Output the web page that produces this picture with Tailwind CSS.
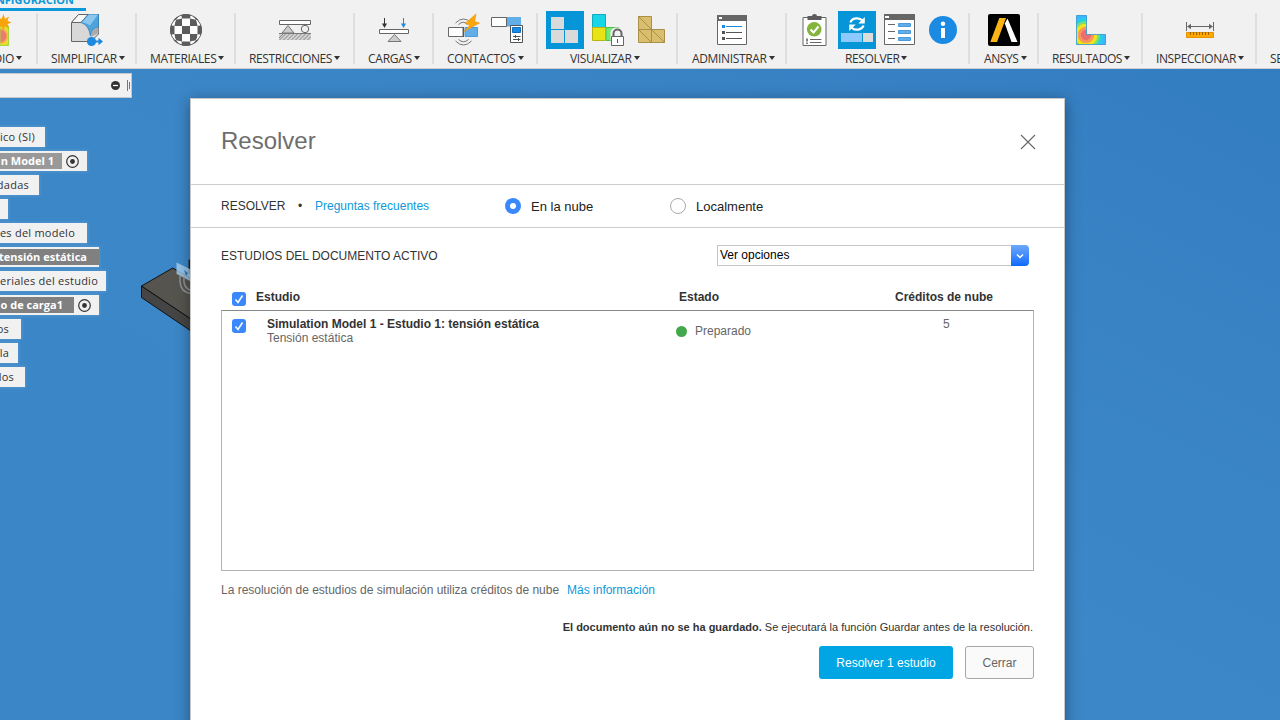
<!DOCTYPE html>
<html lang="es">
<head>
<meta charset="utf-8">
<title>Resolver</title>
<script src="https://cdn.jsdelivr.net/npm/@tailwindcss/browser@4"></script>
</head>
<body class="relative flex h-[720px] w-[1280px] flex-col overflow-hidden bg-[#3b86c6] font-['Liberation_Sans',Arial,sans-serif]">

<!-- Ribbon -->
<header class="flex h-[69px] shrink-0 flex-col overflow-hidden border-b border-[#cfcfcf] bg-[#f1f1f1] font-['Open_Sans',sans-serif] text-[12px] text-[#333]">
  <div class="flex h-[13px] w-[86px] shrink-0 flex-col">
    <div class="flex h-[7px] items-end justify-end pr-[12px] text-[11px] leading-[14px] font-bold text-[#0d99d9]"><span>NFIGURACIÓN</span></div>
    <div class="mt-px h-[3px] bg-[#0d99d9]"></div>
  </div>
  <div class="flex h-[51px] w-[1330px] [&>*>*]:shrink-0 [&>*>*:first-child]:-mt-[2px]">
    <div class="flex w-[36px] flex-col">
      <svg class="h-[38px] w-[14px]" viewBox="0 11 14 38"><defs><radialGradient id="heat0" gradientUnits="userSpaceOnUse" cx="0" cy="36" r="13"><stop offset=".45" stop-color="#ee7a73"/><stop offset=".5" stop-color="#fba052"/><stop offset=".7" stop-color="#f5e02a"/><stop offset="1" stop-color="#8be04e"/></radialGradient></defs><path d="M0 26H8.500V45.500H0Z" fill="url(#heat0)" stroke="#a3d93a"/><path d="M3.500 14l1.500 5 4-2.500-1.500 4.200 4 1.800-4 1.600 1.500 4.400-4.300-2.500L3.500 31l-1.700-4.800L-2 28V17l3.500 2z" fill="#f7a30a"/></svg>
      <div class="flex h-[20px] items-center"><span class="flex w-[14px] justify-end tracking-[-0.3px]">DIO</span><i class="-mt-[2px] ml-[2px] h-[4px] w-[6px] bg-[#333] [clip-path:polygon(0_0,100%_0,50%_100%)]"></i></div>
    </div>
    <div class="flex w-[99px] flex-col border-l-2 border-[#dedede] pl-[13px]">
      <svg class="ml-[20px] h-[38px] w-[34px]" viewBox="71 11 34 38"><path d="M71.500 22.500L78.500 14.500H98.500V34L91 41.500H71.500Z" fill="#d8d8d8" stroke="#666"/><path d="M71.500 22.500L78.500 14.500H88L81 22.500Z" fill="#f6f6f6" stroke="#666"/><path d="M88.500 14.500H98.500V27Q91.500 28 90.500 36Q89 25 81 22.500Z" fill="#4ea3dc" stroke="#2d82bd" stroke-width=".8"/><path d="M89 14.500H98L90 25.500Q87 23 82 22.300Z" fill="#8cc6ee"/><path d="M90.500 37Q91.500 28.500 98.500 27.500V33Z" fill="#aaa"/><path d="M91 41.500H98" stroke="#f1f1f1" stroke-width="3"/><circle cx="91.500" cy="41.500" r="4.600" fill="#1a8ae2"/><path d="M95 41.500h5" stroke="#1a8ae2" stroke-width="2"/><path d="M98.500 37.800l4.500 3.700-4.500 3.700z" fill="#1a8ae2"/></svg>
      <div class="flex h-[20px] items-center"><span class="w-[66px] tracking-[-0.34px]">SIMPLIFICAR</span><i class="-mt-[2px] ml-[2px] h-[4px] w-[6px] bg-[#333] [clip-path:polygon(0_0,100%_0,50%_100%)]"></i></div>
    </div>
    <div class="flex w-[99px] flex-col border-l-2 border-[#dedede] pl-[13px]">
      <svg class="ml-[20px] h-[38px] w-[32px]" viewBox="170 11 32 38"><clipPath id="ball"><circle cx="186" cy="30" r="16"/></clipPath><g clip-path="url(#ball)"><path d="M170 14h32v32h-32z" fill="#fff"/><g fill="#5c5c5c"><path d="M182 26h8v8h-8zM181.500 14h9l-.3 4.500h-8.400zM181.500 46h9l-.3-4.500h-8.400zM170 25.500v9l4.500-.3v-8.400zM202 25.500v9l-4.500-.3v-8.400z"/><path d="M182 26h-7.500q.3-4 1.700-6.300l5.800-1.200zM190 26h7.500q-.3-4-1.700-6.300l-5.800-1.200zM182 34h-7.500q.3 4 1.700 6.300l5.800 1.200zM190 34h7.500q-.3 4-1.700 6.300l-5.800 1.200z"/><path d="M176.200 19.700L171 21V14h9zM195.800 19.700L201 21V14h-9zM176.200 40.300L171 39v7h9zM195.800 40.300L201 39v7h-9z"/></g></g><circle cx="186" cy="30" r="15.500" fill="none" stroke="#5c5c5c"/></svg>
      <div class="flex h-[20px] items-center"><span class="w-[66px] tracking-[-0.3px]">MATERIALES</span><i class="-mt-[2px] ml-[2px] h-[4px] w-[6px] bg-[#333] [clip-path:polygon(0_0,100%_0,50%_100%)]"></i></div>
    </div>
    <div class="flex w-[119px] flex-col border-l-2 border-[#dedede] pl-[13px]">
      <svg class="ml-[30px] h-[38px] w-[32px]" viewBox="279 11 32 38"><path d="M279.500 20.500h31v4h-31z" fill="#fff" stroke="#666"/><path d="M282 33l6-7.500 6 7.500z" fill="#ccc" stroke="#777"/><circle cx="305" cy="29" r="3.700" fill="#f1f1f1" stroke="#666"/><path d="M279 33h32v7h-32z" fill="#d2d2d2"/><path d="M279 33.500h32" stroke="#777"/><path d="M279 38l4-4M279.500 40l6-6M283.500 40l6-6M287.500 40l6-6M291.500 40l6-6M295.500 40l6-6M299.500 40l6-6M303.500 40l6-6M307.500 40l3.500-3.500" stroke="#888"/></svg>
      <div class="flex h-[20px] items-center"><span class="w-[83px] tracking-[-0.39px]">RESTRICCIONES</span><i class="-mt-[2px] ml-[2px] h-[4px] w-[6px] bg-[#333] [clip-path:polygon(0_0,100%_0,50%_100%)]"></i></div>
    </div>
    <div class="flex w-[79px] flex-col border-l-2 border-[#dedede] pl-[13px]">
      <svg class="ml-[11px] h-[38px] w-[30px]" viewBox="379 11 30 38"><path d="M379.500 29.500h29v4h-29z" fill="#fff" stroke="#666"/><path d="M388 41.500l6.500-7 6.500 7z" fill="#ccc" stroke="#777"/><path d="M384.500 18v8" stroke="#333"/><path d="M382 23.500h5l-2.500 4.500z" fill="#333"/><path d="M403.500 18v8" stroke="#1a8ae2"/><path d="M401 23.500h5l-2.500 4.500z" fill="#1a8ae2"/></svg>
      <div class="flex h-[20px] items-center"><span class="w-[44px] tracking-[-0.25px]">CARGAS</span><i class="-mt-[2px] ml-[2px] h-[4px] w-[6px] bg-[#333] [clip-path:polygon(0_0,100%_0,50%_100%)]"></i></div>
    </div>
    <div class="flex w-[104px] flex-col border-l-2 border-[#dedede] pl-[13px]">
      <div class="ml-[1px] flex gap-[11px]">
        <svg class="h-[38px] w-[32px]" viewBox="448 11 32 38"><path d="M448.500 27.500h14.500v9h-14.500z" fill="#fff" stroke="#666"/><path d="M465 27.500h12.500v9H465z" fill="#62aee8" stroke="#4f9bd8"/><path d="M463.500 27v10" stroke="#c22"/><path d="M455.500 23q8-8 16 0M458.500 24.500q5-4.500 9 0M455.500 41q8 8 16 0M458.500 39.500q5 4.500 10 0" fill="none" stroke="#777"/><path d="M476 14l-11 9.500 5 1.500-6 6.500L479.500 23l-4.800-1.500z" fill="#fba70c" stroke="#f19400" stroke-width=".6"/></svg>
        <svg class="h-[38px] w-[33px]" viewBox="491 11 33 38"><path d="M506 17h15v9.500h-15z" fill="#62aee8"/><path d="M491.500 17.500h15v9h-15z" fill="#fff" stroke="#666"/><path d="M510.500 25.500h12v17h-12z" fill="#fff" stroke="#555"/><path d="M512.500 27.500h8v5h-8z" fill="#1a8ae2" stroke="#0f6fbd"/><path d="M513 36.500h7.500M513 39.500h7.500M515.500 35v3M518.500 38v3" stroke="#555"/></svg>
      </div>
      <div class="flex h-[20px] items-center"><span class="w-[69px] tracking-[-0.19px]">CONTACTOS</span><i class="-mt-[2px] ml-[2px] h-[4px] w-[6px] bg-[#333] [clip-path:polygon(0_0,100%_0,50%_100%)]"></i></div>
    </div>
    <div class="flex w-[140px] flex-col border-l-2 border-[#dedede] pl-[8px]">
      <div class="flex gap-[8px]">
        <svg class="h-[38px] w-[38px] bg-[#0696d7]" viewBox="546 11 38 38"><path d="M551 17h13v12h-13zM551 30h13v13h-13zM565 30h13v13h-13z" fill="#dadada"/></svg>
        <svg class="h-[38px] w-[32px]" viewBox="592 11 32 38"><path d="M592.500 14.500h13v13h-13z" fill="#19d5e8" stroke="#0fabc0"/><path d="M606 27.500h13v13h-13z" fill="#74e874" stroke="#4fbf4f"/><path d="M592.500 27.500h13v13h-13z" fill="#e8e317" stroke="#b9b40f"/><path d="M610.500 36V32q1-4 5-4.500h4q4 .5 4.500 8.500h1v10h-14z" fill="#f1f1f1"/><path d="M613.500 36v-2.500a4 4 0 0 1 8 0V36" fill="none" stroke="#666" stroke-width="2"/><path d="M611.500 36.500h12v9h-12z" fill="#fff" stroke="#666"/><path d="M617.500 39v4" stroke="#555"/></svg>
        <svg class="ml-[6px] h-[38px] w-[27px]" viewBox="638 11 27 38"><g fill="#d9be6e" stroke="#ab8f47"><path d="M638.500 16.500h13v13h-13zM638.500 29.500h13v13h-13zM651.500 29.500h13v13h-13z"/><path d="M638.500 16.500l13 13M638.500 29.500l13 13M651.500 29.500l13 13"/></g></svg>
      </div>
      <div class="ml-[24px] flex h-[20px] items-center"><span class="w-[62px] tracking-[-0.34px]">VISUALIZAR</span><i class="-mt-[2px] ml-[2px] h-[4px] w-[6px] bg-[#333] [clip-path:polygon(0_0,100%_0,50%_100%)]"></i></div>
    </div>
    <div class="flex w-[109px] flex-col border-l-2 border-[#dedede] pl-[14px]">
      <svg class="ml-[25px] h-[38px] w-[30px]" viewBox="717 11 30 38"><path d="M717.500 15.500h29v29h-29z" fill="#fff" stroke="#666"/><path d="M717 15h30v6h-30z" fill="#666"/><path d="M719 17h3v2h-3z" fill="#fff"/><path d="M722 25h3v3h-3z" fill="#1a8ae2"/><path d="M726 26.500h16" stroke="#1a8ae2"/><path d="M722 31h3v3h-3zM722 37h3v3h-3z" fill="#555"/><path d="M726 32.500h16M726 38.500h16" stroke="#555"/></svg>
      <div class="flex h-[20px] items-center"><span class="w-[75px] tracking-[-0.35px]">ADMINISTRAR</span><i class="-mt-[2px] ml-[2px] h-[4px] w-[6px] bg-[#333] [clip-path:polygon(0_0,100%_0,50%_100%)]"></i></div>
    </div>
    <div class="flex w-[183px] flex-col border-l-2 border-[#dedede] pl-[15px]">
      <div class="flex">
        <svg class="h-[38px] w-[25px]" viewBox="802.500 11 25 38"><path d="M803.500 17.500h23v28h-23z" fill="#fff" stroke="#666"/><path d="M808 16h4.500q0-2 2.500-2t2.500 2h4.500v4h-14z" fill="#5c5c5c"/><circle cx="814.700" cy="29.300" r="7.300" fill="#83b53c"/><path d="M811 29.500l3 3 5-6" fill="none" stroke="#fff" stroke-width="2"/><path d="M807.500 38.500v3M807.500 42.500v1.500" stroke="#555" stroke-width="1.500"/><path d="M810.500 39.500h11.500M810.500 42.500h11.500" stroke="#666"/></svg>
        <svg class="ml-[11px] h-[38px] w-[38px] bg-[#0696d7]" viewBox="838 11 38 38"><path d="M841 33h21v9h-21z" fill="#8cc9fc"/><path d="M863 33h10v9h-10z" fill="#dcdcdc"/><g fill="none" stroke="#fff" stroke-width="2.200"><path d="M850.500 22.500a6.800 5.500 0 0 1 12-2"/><path d="M863.500 25.500a6.800 5.500 0 0 1-12 2"/></g><path d="M864.800 17v6.500h-6.500zM849.200 31v-6.500h6.500z" fill="#fff"/></svg>
        <svg class="ml-[8px] h-[38px] w-[31px]" viewBox="884 11 31 38"><path d="M884.500 14.500h30v30h-30z" fill="#fff" stroke="#666"/><path d="M884 14h31v6h-31z" fill="#666"/><path d="M885 16h4v2h-4z" fill="#fff"/><path d="M888 24.500h7M888 31.500h7M888 38.500h7" stroke="#666"/><path d="M898.500 23.500h12v3h-12zM898.500 30.500h12v3h-12zM898.500 37.500h12v3h-12z" fill="#62aee8" stroke="#4b9bdc"/></svg>
        <svg class="ml-[14px] h-[38px] w-[28px]" viewBox="929 11 28 38"><circle cx="943" cy="30" r="14" fill="#1a8ae2"/><circle cx="943" cy="23.800" r="2.200" fill="#fff"/><path d="M941 28h4v10h-4z" fill="#fff"/></svg>
      </div>
      <div class="ml-[43px] flex h-[20px] items-center"><span class="w-[54px] tracking-[-0.37px]">RESOLVER</span><i class="-mt-[2px] ml-[2px] h-[4px] w-[6px] bg-[#333] [clip-path:polygon(0_0,100%_0,50%_100%)]"></i></div>
    </div>
    <div class="flex w-[69px] flex-col border-l-2 border-[#dedede] pl-[14px]">
      <svg class="ml-[4px] h-[38px] w-[32px]" viewBox="988 11 32 38"><rect x="988" y="14" width="32" height="32" rx="2" fill="#000"/><path d="M990.300 42L999.300 18H1006L997 42Z" fill="#fdb515"/><path d="M1004.800 23.500L1007.500 18.500L1017.500 42H1011.500Z" fill="#fff"/></svg>
      <div class="flex h-[20px] items-center"><span class="w-[35px] tracking-[-0.4px]">ANSYS</span><i class="-mt-[2px] ml-[2px] h-[4px] w-[6px] bg-[#333] [clip-path:polygon(0_0,100%_0,50%_100%)]"></i></div>
    </div>
    <div class="flex w-[104px] flex-col border-l-2 border-[#dedede] pl-[13px]">
      <svg class="ml-[24px] h-[38px] w-[30px]" viewBox="1076 11 30 38"><defs><radialGradient id="heat1" gradientUnits="userSpaceOnUse" cx="1086" cy="35" r="20"><stop offset=".24" stop-color="#e86f6d"/><stop offset=".26" stop-color="#f88f62"/><stop offset=".4" stop-color="#faa04f"/><stop offset=".42" stop-color="#f7e016"/><stop offset=".55" stop-color="#ece424"/><stop offset=".58" stop-color="#7ddf6b"/><stop offset=".69" stop-color="#67dd8c"/><stop offset=".72" stop-color="#1cd3df"/><stop offset=".84" stop-color="#2acdf0"/><stop offset=".87" stop-color="#3cb8fa"/></radialGradient></defs><path d="M1076.500 15.500h10v19h19v10h-29z" fill="url(#heat1)" stroke="#2f93cf" stroke-opacity=".8"/></svg>
      <div class="flex h-[20px] items-center"><span class="w-[70px] tracking-[-0.45px]">RESULTADOS</span><i class="-mt-[2px] ml-[2px] h-[4px] w-[6px] bg-[#333] [clip-path:polygon(0_0,100%_0,50%_100%)]"></i></div>
    </div>
    <div class="flex w-[114px] flex-col border-l-2 border-[#dedede] pl-[13px]">
      <svg class="ml-[30px] h-[38px] w-[28px]" viewBox="1186 11 28 38"><path d="M1186.500 22v9M1213.500 22v9M1188 26.500h24" stroke="#666"/><path d="M1187 26.500l4-2.700v5.400zM1213 26.500l-4-2.700v5.400z" fill="#666"/><path d="M1186.500 32.500h27v5h-27z" fill="#ffa800" stroke="#e59200"/><path d="M1190.500 32v3M1193.500 32v3M1196.500 32v3M1199.500 32v3M1202.500 32v3M1205.500 32v3M1208.500 32v3" stroke="#9a6400"/></svg>
      <div class="flex h-[20px] items-center"><span class="w-[80px] tracking-[-0.39px]">INSPECCIONAR</span><i class="-mt-[2px] ml-[2px] h-[4px] w-[6px] bg-[#333] [clip-path:polygon(0_0,100%_0,50%_100%)]"></i></div>
    </div>
    <div class="flex w-[60px] flex-col border-l-2 border-[#dedede] pl-[13px]">
      <div class="h-[38px]"></div>
      <div class="flex h-[20px] items-center tracking-[-0.35px]">SE</div>
    </div>
  </div>
</header>

<!-- Canvas with the browser tree -->
<main class="flex min-h-0 flex-1 flex-col bg-[linear-gradient(to_bottom_left,#327cc0,#3882c4_20%,#3c87c8_50%,#3b86c6)] pt-[4px] font-['Open_Sans',sans-serif] text-[11px] tracking-[0.24px] text-[#333]">
  <div class="flex h-[25px] w-[132px] shrink-0 items-center justify-end border border-l-0 border-[#c4c8cc] bg-[#f1f1f1]">
    <svg class="h-[11px] w-[22px]" viewBox="0 0 22 11"><circle cx="6.500" cy="5.500" r="4.500" fill="#333"/><path d="M4 5.500h5" stroke="#fff" stroke-width="1.200"/><path d="M18.500 0v11M20.500 2v7" stroke="#777"/></svg>
  </div>
  <div class="mt-[29px] flex flex-col items-start gap-[4px] whitespace-nowrap *:flex *:h-[20px] *:items-center *:justify-end *:bg-[#f1f1f1] *:shadow-[0_0_3px_1px_rgba(255,255,255,0.13)]">
    <div class="w-[45px] pr-[10px]">ico (SI)</div>
    <div class="w-[87px] pr-[8px]"><b class="flex h-[16px] w-[62px] items-center justify-end bg-[#999] pr-[8px] tracking-normal text-white">n Model 1</b><svg class="ml-[4px] h-[13px] w-[13px]" viewBox="0 0 13 13"><circle cx="6.500" cy="6.500" r="5.800" fill="none" stroke="#333" stroke-width="1.200"/><circle cx="6.500" cy="6.500" r="2.400" fill="#333"/></svg></div>
    <div class="w-[39px] pr-[10px]">dadas</div>
    <div class="w-[8px]"></div>
    <div class="w-[87px] pr-[12px]">es del modelo</div>
    <div class="w-[99px]"><b class="flex h-[16px] w-[99px] items-center justify-end bg-[#808080] pr-[12px] tracking-normal text-white">tensión estática</b></div>
    <div class="w-[106px] pr-[8px]">teriales del estudio</div>
    <div class="w-[99px] pr-[8px]"><b class="flex h-[16px] w-[74px] items-center justify-end bg-[#808080] pr-[11px] tracking-normal text-white">o de carga1</b><svg class="ml-[4px] h-[13px] w-[13px]" viewBox="0 0 13 13"><circle cx="6.500" cy="6.500" r="5.800" fill="none" stroke="#333" stroke-width="1.200"/><circle cx="6.500" cy="6.500" r="2.400" fill="#333"/></svg></div>
    <div class="w-[21px] pr-[12px]">os</div>
    <div class="w-[18px] pr-[9px]">la</div>
    <div class="w-[25px] pr-[11px]">dos</div>
  </div>
</main>

<!-- Solid body on the canvas -->
<svg class="absolute top-[255px] left-[140px] h-[80px] w-[54px]" viewBox="140 255 54 80"><path d="M141.500 286V297.500L194 333V321Z" fill="#454545" stroke="#111"/><path d="M141.500 286L172.700 268L194 280V321Z" fill="#55544e" stroke="#111"/><path d="M188.500 260l4-2v16h-4z" fill="#222"/><path d="M176.500 262.500L194 271V286L176.500 274Z" fill="#a9d0ee" fill-opacity=".8"/><path d="M176.500 274L190 281V286L176.500 278Z" fill="#55544e"/><path d="M184 270l4 3-2 3z" fill="#2d78bd"/><path d="M180 276q-1 13 6 16l6 2M184 277q-1 9 4 12l4 2" fill="none" stroke="#8b8f93" stroke-width="1.600"/></svg>

<!-- Solve dialog -->
<section class="absolute top-[98px] left-[190px] flex h-[640px] w-[875px] flex-col border border-[#c8c8c8] bg-white text-[12px] leading-[14px] text-[#333] shadow-[0_3px_14px_rgba(0,0,0,0.38)]">
  <div class="flex h-[86px] shrink-0 items-center justify-between border-b border-[#ccc] pr-[28px] pl-[30px]">
    <h1 class="-mt-[2px] text-[24px] leading-[28px] text-[#6e6e6e]">Resolver</h1>
    <svg class="h-[16px] w-[16px]" viewBox="0 0 16 16"><path d="M1 1l14 14M15 1L1 15" stroke="#666" stroke-width="1.100"/></svg>
  </div>
  <div class="flex h-[43px] shrink-0 items-center border-b border-[#ccc] pl-[30px]">
    <span class="w-[77px]">RESOLVER</span><span class="w-[17px]">•</span><a class="w-[190px] text-[#0d99d9]">Preguntas frecuentes</a>
    <span class="flex h-[16px] w-[16px] items-center justify-center rounded-full bg-[#3b88fd]"><i class="h-[6px] w-[6px] rounded-full bg-white"></i></span>
    <span class="ml-[10px] w-[139px] pt-px text-[13px] text-[#222]">En la nube</span>
    <span class="h-[16px] w-[16px] rounded-full border border-[#a9a9a9] bg-white"></span>
    <span class="ml-[10px] pt-px text-[13px] text-[#222]">Localmente</span>
  </div>
  <div class="flex flex-col px-[30px] pt-[17px]">
    <div class="flex h-[21px] items-center justify-between pr-[5px]">
      <span>ESTUDIOS DEL DOCUMENTO ACTIVO</span>
      <div class="flex h-[21px] w-[312px]">
        <div class="flex flex-1 items-center border border-r-0 border-[#c6c6c6] pb-px pl-[2px] text-black">Ver opciones</div>
        <div class="flex w-[18px] items-center justify-center rounded-r-[4px] bg-linear-to-b from-[#6ba8f9] to-[#0a68fe]"><svg class="h-[6px] w-[8px]" viewBox="0 0 8 6"><path d="M1 1.500l3 3 3-3" fill="none" stroke="#fff" stroke-width="1.500"/></svg></div>
      </div>
    </div>
    <div class="flex h-[44px] pt-[24px] pl-[11px] font-bold">
      <span class="mt-[2px] flex h-[14px] w-[14px] items-center justify-center rounded-[3px] bg-[#3b88fd]"><svg class="h-[10px] w-[10px]" viewBox="0 0 10 10"><path d="M1.500 5.500l2.500 3 4.500-7" fill="none" stroke="#fff" stroke-width="1.500"/></svg></span>
      <span class="ml-[10px] w-[423px]">Estudio</span><span class="w-[216px]">Estado</span><span>Créditos de nube</span>
    </div>
    <div class="flex h-[261px] border border-[#b3b3b3] border-t-[#888] pt-[6px] pl-[10px]">
      <span class="mt-[2px] flex h-[14px] w-[14px] items-center justify-center rounded-[3px] bg-[#3b88fd]"><svg class="h-[10px] w-[10px]" viewBox="0 0 10 10"><path d="M1.500 5.500l2.500 3 4.500-7" fill="none" stroke="#fff" stroke-width="1.500"/></svg></span>
      <div class="ml-[21px] w-[409px]"><b>Simulation Model 1 - Estudio 1: tensión estática</b><p class="text-[#666]">Tensión estática</p></div>
      <div class="mt-[7px] flex h-[14px] w-[267px] items-center gap-[8px] text-[#666]"><i class="h-[11px] w-[11px] rounded-full bg-[#42a84b]"></i>Preparado</div>
      <span class="text-[#666]">5</span>
    </div>
    <p class="mt-[12px] tracking-[-0.012px] text-[#666]">La resolución de estudios de simulación utiliza créditos de nube<a class="ml-[8px] text-[#0d99d9]">Más información</a></p>
    <p class="mt-[23px] pr-px text-right text-[11px] tracking-[-0.005px]"><b>El documento aún no se ha guardado.</b> Se ejecutará la función Guardar antes de la resolución.</p>
    <div class="mt-[12px] flex justify-end gap-[12px]">
      <button class="h-[33px] w-[134px] rounded-[3px] bg-[#00a6e4] text-white">Resolver 1 estudio</button>
      <button class="h-[33px] w-[69px] rounded-[3px] border border-[#a6a6a6] bg-[#fafafa] text-[#666]">Cerrar</button>
    </div>
  </div>
</section>
</body>
</html>
